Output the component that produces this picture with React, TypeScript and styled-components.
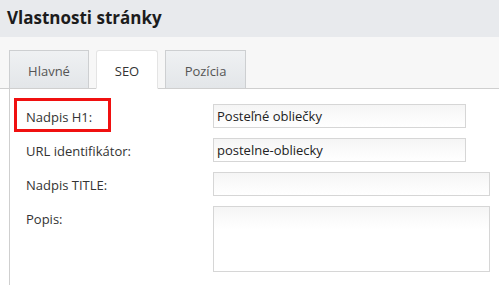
import React from "react";
import styled, { createGlobalStyle } from "styled-components";

const Global = createGlobalStyle`
  html, body { margin: 0; padding: 0; background: #ffffff; }
  body { font-family: "Open Sans", "Noto Sans", sans-serif; color: #333; overflow: hidden; }
  * { box-sizing: border-box; }
`;

const Page = styled.div`
  width: 499px;
  height: 285px;
  display: flex;
  flex-direction: column;
`;

const Header = styled.div`
  height: 37px;
  background: #e8eaed;
  display: flex;
  align-items: center;
  padding-left: 7px;
`;

const Title = styled.h1`
  margin: 0;
  font-size: 17px;
  font-weight: 700;
  color: #1c1c1c;
  line-height: 20px;
  margin-top: -2px;
`;

const TabBar = styled.div`
  background: #f7f7f7;
  padding: 13px 0 0 9px;
  display: flex;
  gap: 7px;
  border-bottom: 1px solid #cfcfcf;
`;

const Tab = styled.div<{ $active?: boolean; $w: number }>`
  width: ${(p) => p.$w}px;
  height: 39px;
  margin-bottom: -1px;
  display: flex;
  align-items: center;
  justify-content: center;
  font-size: 13px;
  color: ${(p) => (p.$active ? "#333" : "#555")};
  border: 1px solid ${(p) => (p.$active ? "#e4e4e4" : "#cdcfd1")};
  border-bottom: ${(p) => (p.$active ? "1px solid #fff" : "1px solid #cfcfcf")};
  background: ${(p) =>
    p.$active ? "#ffffff" : "linear-gradient(#eff1f3, #e3e6e9)"};
  border-radius: ${(p) => (p.$active ? "3px 3px 0 0" : "0")};
  padding-top: 2px;
`;

const Content = styled.div`
  flex: 1;
  margin-left: 9px;
  border-left: 1px solid #cfcfcf;
  background: #fff;
  padding: 15px 0 0 4px;
  display: flex;
  flex-direction: column;
  gap: 10px;
`;

const Row = styled.div`
  display: flex;
  align-items: flex-start;
`;

const LabelCell = styled.div`
  width: 199px;
  flex-shrink: 0;
  position: relative;
`;

const Label = styled.label`
  display: inline-block;
  font-size: 13px;
  line-height: 18px;
  color: #333;
  padding: 4px 0 0 12px;
  white-space: nowrap;
`;

const Marker = styled.span`
  position: absolute;
  left: 0;
  top: -6px;
  width: 97px;
  height: 34px;
  border: 3px solid #f01010;
  pointer-events: none;
`;

const Input = styled.div<{ $w: number }>`
  width: ${(p) => p.$w}px;
  height: 24px;
  border: 1px solid #d6d6d6;
  background: linear-gradient(#f5f5f5, #ffffff);
  font-size: 13px;
  line-height: 22px;
  padding-left: 3px;
  color: #222;
  white-space: nowrap;
`;

const TextArea = styled.div`
  width: 277px;
  height: 66px;
  border: 1px solid #d6d6d6;
  background: linear-gradient(#f5f5f5, #ffffff 22px);
`;

export default function App() {
  return (
    <Page>
      <Global />
      <Header>
        <Title>Vlastnosti stránky</Title>
      </Header>
      <TabBar>
        <Tab $w={80}>Hlavné</Tab>
        <Tab $w={62} $active>
          SEO
        </Tab>
        <Tab $w={81}>Pozícia</Tab>
      </TabBar>
      <Content>
        <Row>
          <LabelCell>
            <Marker />
            <Label>Nadpis H1:</Label>
          </LabelCell>
          <Input $w={253}>Posteľné obliečky</Input>
        </Row>
        <Row>
          <LabelCell>
            <Label>URL identifikátor:</Label>
          </LabelCell>
          <Input $w={253}>postelne-obliecky</Input>
        </Row>
        <Row>
          <LabelCell>
            <Label>Nadpis TITLE:</Label>
          </LabelCell>
          <Input $w={277} />
        </Row>
        <Row>
          <LabelCell>
            <Label>Popis:</Label>
          </LabelCell>
          <TextArea />
        </Row>
      </Content>
    </Page>
  );
}
